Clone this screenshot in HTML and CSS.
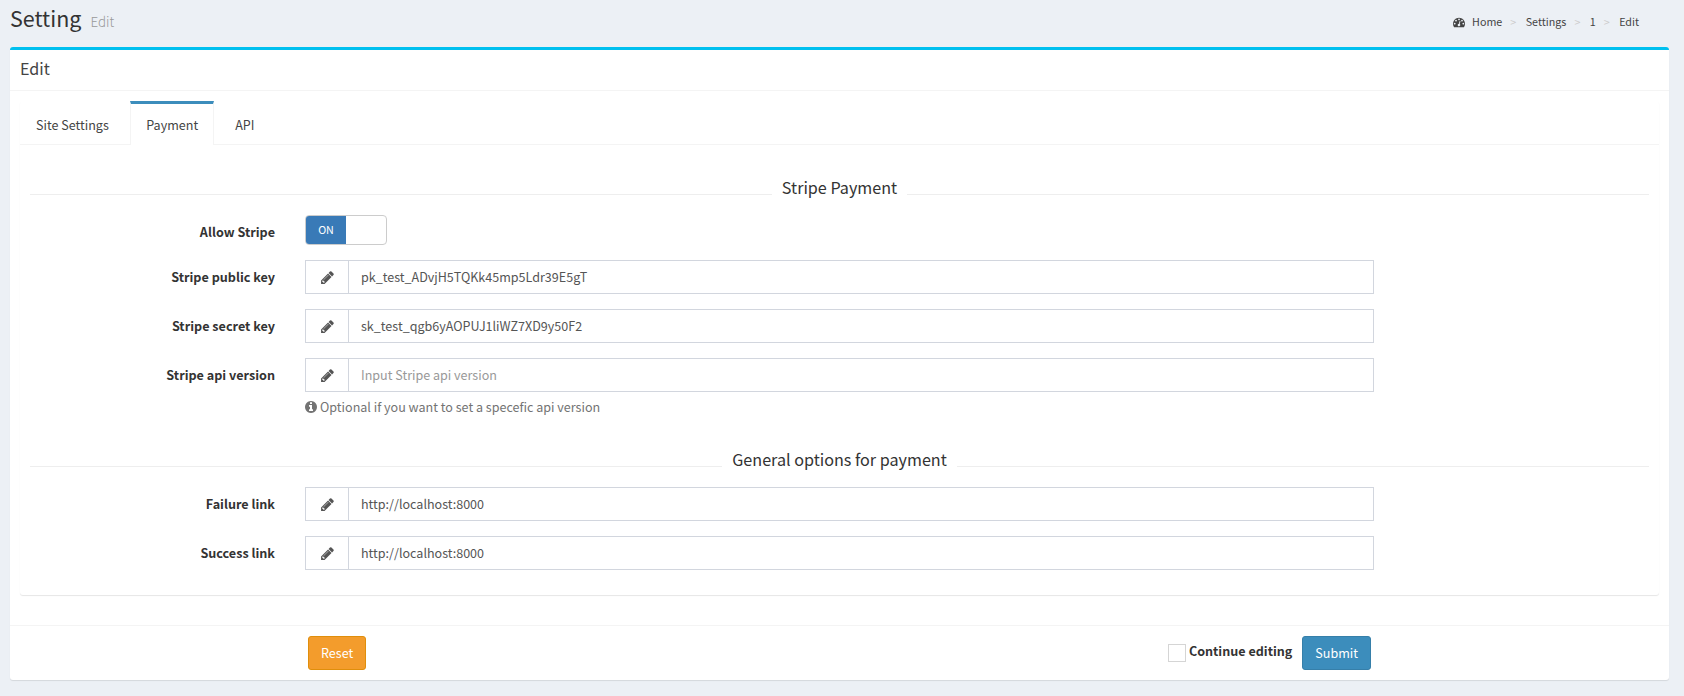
FILE: index.html
```
<!DOCTYPE html>
<html lang="en">
<head>
<meta charset="utf-8">
<title>Setting | Edit</title>
<link rel="stylesheet" href="styles.css">
</head>
<body>
<svg class="sprite" aria-hidden="true">
  <symbol id="pencil" viewBox="0 0 1792 1792"><path d="M491 1536l91-91-235-235-91 91v107h128v128h107zm523-928q0-22-22-22-10 0-17 7l-542 542q-7 7-7 17 0 22 22 22 10 0 17-7l542-542q7-7 7-17zm-54-192l416 416-832 832h-416v-416zm683 96q0 53-37 90l-166 166-416-416 166-165q36-38 90-38 53 0 91 38l235 234q37 39 37 91z"/></symbol>
  <symbol id="info" viewBox="0 0 1792 1792"><path d="M1152 1376v-160q0-14-9-23t-23-9h-96v-512q0-14-9-23t-23-9h-320q-14 0-23 9t-9 23v160q0 14 9 23t23 9h96v320h-96q-14 0-23 9t-9 23v160q0 14 9 23t23 9h448q14 0 23-9t9-23zm-128-896v-160q0-14-9-23t-23-9h-192q-14 0-23 9t-9 23v160q0 14 9 23t23 9h192q14 0 23-9t9-23zm640 416q0 209-103 385.5t-279.5 279.5-385.5 103-385.5-103-279.5-279.5-103-385.5 103-385.5 279.5-279.5 385.5-103 385.5 103 279.5 279.5 103 385.5z"/></symbol>
  <symbol id="dashboard" viewBox="0 0 1792 1792"><path d="M384 1152q0-53-37.5-90.5t-90.5-37.5-90.5 37.5-37.5 90.5 37.5 90.5 90.5 37.5 90.5-37.5 37.5-90.5zm192-448q0-53-37.5-90.5t-90.5-37.5-90.5 37.5-37.5 90.5 37.5 90.5 90.5 37.5 90.5-37.5 37.5-90.5zm428 481l101-382q6-26-7.5-48.5t-38.5-29.5-48 6.5-30 39.5l-101 382q-60 5-107 43.5t-63 98.5q-20 77 20 146t117 89 146-20 89-117q16-60-6-117t-72-91zm660-33q0-53-37.5-90.5t-90.5-37.5-90.5 37.5-37.5 90.5 37.5 90.5 90.5 37.5 90.5-37.5 37.5-90.5zm-640-640q0-53-37.5-90.5t-90.5-37.5-90.5 37.5-37.5 90.5 37.5 90.5 90.5 37.5 90.5-37.5 37.5-90.5zm448 192q0-53-37.5-90.5t-90.5-37.5-90.5 37.5-37.5 90.5 37.5 90.5 90.5 37.5 90.5-37.5 37.5-90.5zm320 448q0 261-141 483-19 29-54 29h-1402q-35 0-54-29-141-221-141-483 0-182 71-348t191-286 286-191 348-71 348 71 286 191 191 286 71 348z"/></symbol>
</svg>

<header class="page-header">
  <h1 class="page-title">Setting<small class="page-subtitle">Edit</small></h1>
  <nav class="breadcrumb">
    <svg class="crumb-icon"><use href="#dashboard"/></svg>
    <a class="crumb">Home</a><span class="crumb-sep">&gt;</span>
    <a class="crumb">Settings</a><span class="crumb-sep">&gt;</span>
    <a class="crumb">1</a><span class="crumb-sep">&gt;</span>
    <a class="crumb">Edit</a>
  </nav>
</header>

<form class="box">
  <div class="box-header"><h3 class="box-title">Edit</h3></div>

  <div class="tabs-card">
    <ul class="tabs">
      <li class="tab">Site Settings</li>
      <li class="tab tab-active">Payment</li>
      <li class="tab">API</li>
    </ul>
    <div class="tab-content">
      <h4 class="divider">Stripe Payment</h4>
      <div class="row row-switch">
        <label class="label">Allow Stripe</label>
        <div class="switch"><span class="switch-on">ON</span></div>
      </div>
      <div class="row">
        <label class="label">Stripe public key</label>
        <div class="group"><span class="addon"><svg class="icon icon-pencil"><use href="#pencil"/></svg></span><input class="input" type="text" value="pk_test_ADvjH5TQKk45mp5Ldr39E5gT"></div>
      </div>
      <div class="row">
        <label class="label">Stripe secret key</label>
        <div class="group"><span class="addon"><svg class="icon icon-pencil"><use href="#pencil"/></svg></span><input class="input" type="text" value="sk_test_qgb6yAOPUJ1liWZ7XD9y50F2"></div>
      </div>
      <div class="row">
        <label class="label">Stripe api version</label>
        <div class="group"><span class="addon"><svg class="icon icon-pencil"><use href="#pencil"/></svg></span><input class="input" type="text" placeholder="Input Stripe api version"></div>
      </div>
      <p class="help"><svg class="icon"><use href="#info"/></svg>Optional if you want to set a specefic api version</p>

      <h4 class="divider">General options for payment</h4>
      <div class="row">
        <label class="label">Failure link</label>
        <div class="group"><span class="addon"><svg class="icon icon-pencil"><use href="#pencil"/></svg></span><input class="input" type="text" value="http://localhost:8000"></div>
      </div>
      <div class="row">
        <label class="label">Success link</label>
        <div class="group"><span class="addon"><svg class="icon icon-pencil"><use href="#pencil"/></svg></span><input class="input" type="text" value="http://localhost:8000"></div>
      </div>
    </div>
  </div>

  <div class="box-footer">
    <button class="btn btn-warning" type="reset">Reset</button>
    <div class="submit-group">
      <span class="checkbox"></span>
      <label class="continue">Continue editing</label>
      <button class="btn btn-primary" type="button">Submit</button>
    </div>
  </div>
</form>
</body>
</html>
```

FILE: styles.css
```
* { box-sizing: border-box; }

body {
  margin: 0;
  height: 696px;
  overflow: hidden;
  background: #ecf0f5;
  color: #333;
  font-family: "Noto Sans CJK SC", "Noto Sans", sans-serif;
  font-size: 12.56px;
  line-height: 20px;
}

.sprite { display: none; }

.icon {
  width: 14px;
  height: 14px;
  fill: currentColor;
}

.icon-pencil {
  width: 15px;
  height: 15px;
}

/* Page header */
.page-header {
  display: flex;
  justify-content: space-between;
  height: 47px;
  padding: 0 45px 0 10px;
}

.page-title {
  margin: 5px 0 0;
  font-size: 21.5px;
  font-weight: 400;
  line-height: 26px;
}

.page-subtitle {
  margin-left: 9px;
  color: #999;
  font-size: 13.4px;
  font-weight: 300;
}

.breadcrumb {
  display: flex;
  align-items: center;
  height: 20px;
  margin-top: 12px;
  color: #444;
  font-size: 10.74px;
}

.crumb-icon {
  width: 12px;
  height: 12px;
  margin-right: 7px;
  fill: currentColor;
}

.crumb-sep {
  width: 23.4px;
  padding-left: 8px;
  color: #ccc;
}

/* Box */
.box {
  width: 1659px;
  height: 633px;
  margin-left: 10px;
  border-top: 3px solid #00c0ef;
  border-radius: 3px;
  background: #fff;
  box-shadow: 0 1px 1px rgba(0, 0, 0, .1);
}

.box-header {
  height: 41px;
  padding: 9px 10px;
  border-bottom: 1px solid #f4f4f4;
}

.box-title {
  margin: 0;
  color: #444;
  font-size: 16.1px;
  font-weight: 400;
  line-height: 18px;
}

/* Tabs */
.tabs-card {
  height: 494px;
  margin: 10px 10px 0;
  border-radius: 3px;
  box-shadow: 0 1px 1px rgba(0, 0, 0, .1);
}

.tabs {
  display: flex;
  height: 44px;
  margin: 0;
  padding: 0;
  border-bottom: 1px solid #f4f4f4;
  list-style: none;
}

.tab {
  height: 44px;
  margin-right: 5px;
  padding: 11px 16px;
  border-top: 3px solid transparent;
  color: #444;
}

.tab-active {
  padding: 11px 15px 11px 15.5px;
  border-right: 1px solid #f4f4f4;
  border-left: 1px solid #f4f4f4;
  border-top-color: #3c8dbc;
  background: #fff;
}

.tab-content { padding: 29px 10px 0; }

/* Section divider */
.divider {
  display: flex;
  gap: 10px;
  height: 25px;
  margin: 0 0 16px;
  font-size: 16.15px;
  font-weight: 400;
  line-height: 27px;
  white-space: nowrap;
}

.divider::before,
.divider::after {
  content: "";
  flex: 1;
  height: 20px;
  border-bottom: 1px solid #eee;
}

/* Form rows */
.row {
  display: grid;
  grid-template-columns: 245px 1069px;
  column-gap: 30px;
  height: 34px;
  margin-bottom: 15px;
}

.row-switch {
  height: 30px;
}

.label {
  padding-top: 7px;
  font-size: 12.62px;
  font-weight: 700;
  text-align: right;
}

.group {
  display: flex;
  border: 1px solid #d2d6de;
}

.addon {
  display: flex;
  align-items: center;
  justify-content: center;
  width: 43px;
  border-right: 1px solid #d2d6de;
  color: #555;
}

.input {
  flex: 1;
  height: 32px;
  padding: 0 12px 2px;
  border: 0;
  background: transparent;
  color: #555;
  font: inherit;
}

.input::placeholder { color: #999; }

.switch {
  width: 82px;
  height: 30px;
  overflow: hidden;
  border: 1px solid #ccc;
  border-radius: 4px;
}

.switch-on {
  display: block;
  width: 40px;
  height: 28px;
  background: #397ab7;
  color: #fff;
  font-size: 10.74px;
  line-height: 28px;
  text-align: center;
}

.help {
  display: flex;
  align-items: center;
  gap: 2px;
  height: 20px;
  margin: -10px 0 29px 274px;
  color: #737373;
}

/* Footer */
.box-footer {
  display: flex;
  justify-content: space-between;
  height: 55px;
  margin-top: 30px;
  padding: 10px 298px 0;
  border-top: 1px solid #f4f4f4;
}

.submit-group {
  display: flex;
  align-items: flex-start;
}

.checkbox {
  width: 18px;
  height: 18px;
  margin: 8px 3px 0 0;
  border: 1px solid #d5d5d5;
}

.continue {
  margin: 5px 10px 0 0;
  font-size: 12.59px;
  font-weight: 700;
}

.btn {
  height: 34px;
  padding: 0 12px;
  border: 1px solid;
  border-radius: 3px;
  color: #fff;
  font: inherit;
}

.btn-warning {
  border-color: #e08e0b;
  background: #f39c2c;
}

.btn-primary {
  border-color: #367fa9;
  background: #3c8dbc;
}
```
